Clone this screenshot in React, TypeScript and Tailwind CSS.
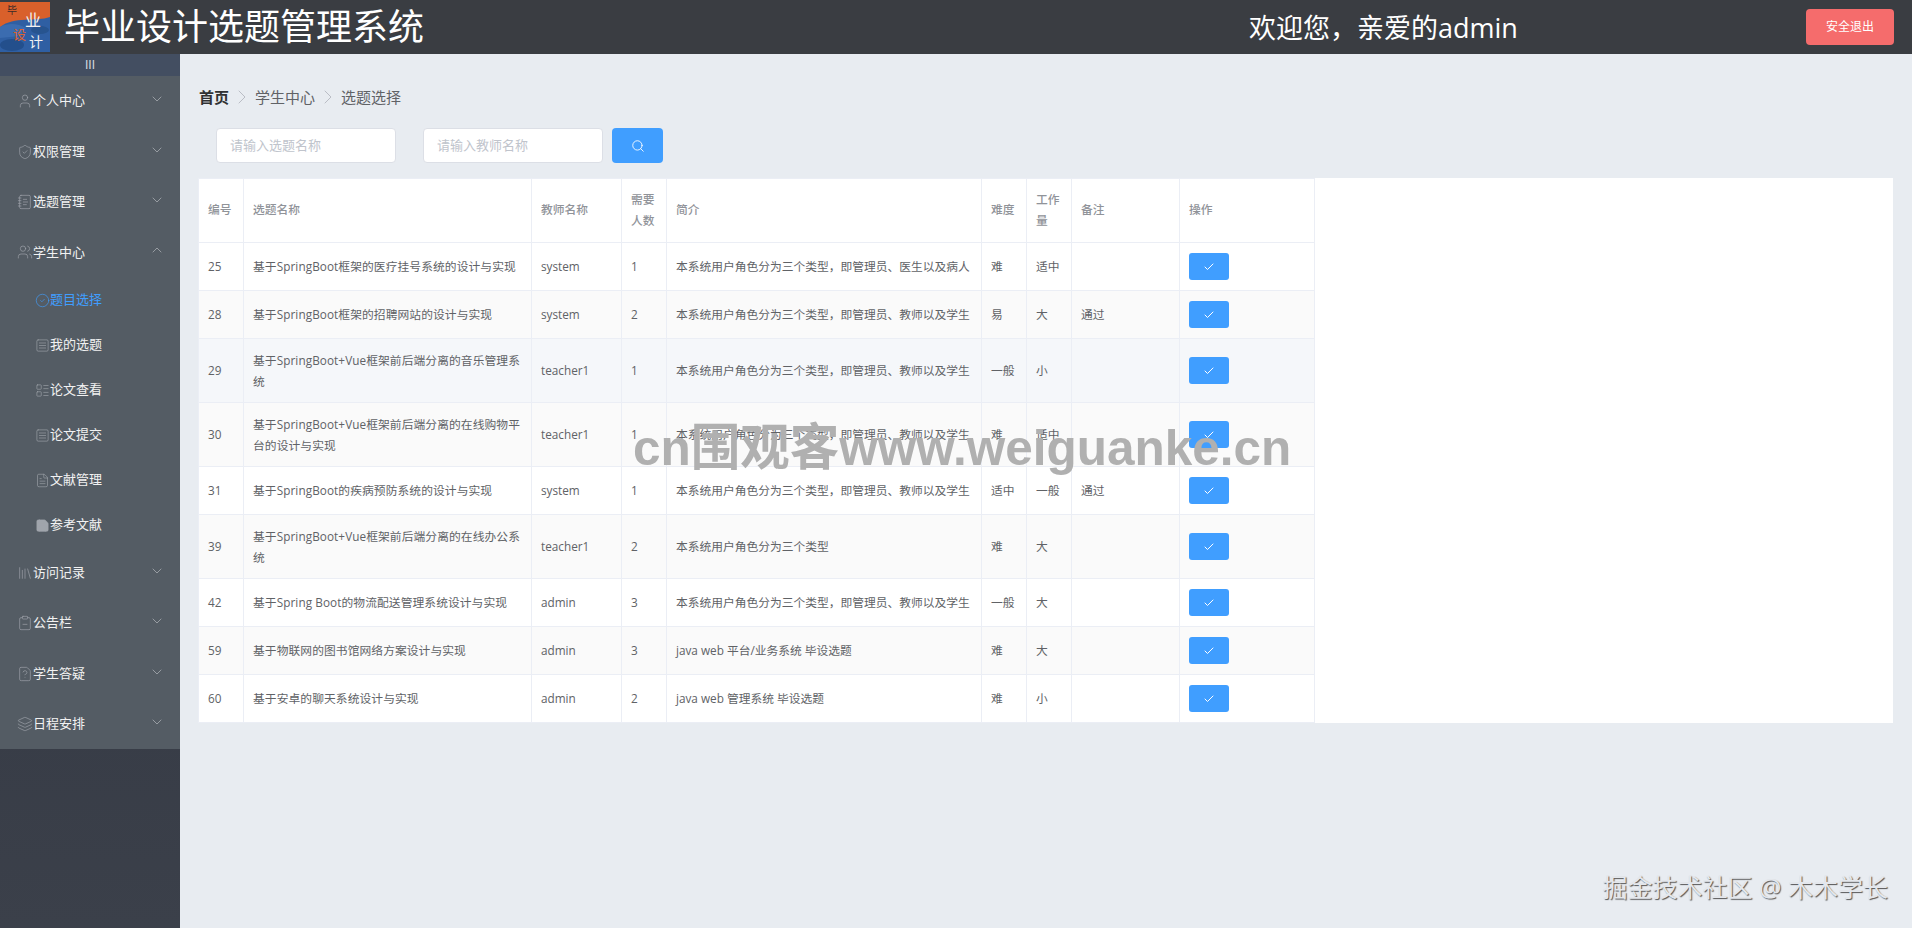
import {
  Check,
  ChevronDown,
  ChevronRight,
  ChevronUp,
  CircleCheck,
  ClipboardMinus,
  FileQuestion,
  FileText,
  LayoutList,
  Layers,
  Library,
  NotebookText,
  Save,
  Search,
  ShieldCheck,
  SquareMenu,
  User,
  Users,
} from "lucide-react";
import type { ComponentType } from "react";

type Icon = ComponentType<{ size?: number; className?: string; strokeWidth?: number; fill?: string }>;

interface Topic {
  id: number;
  title: string;
  teacher: string;
  count: number;
  intro: string;
  level: string;
  work: string;
  note: string;
  bg: string;
  height: string;
}

const topMenu: { label: string; icon: Icon }[] = [
  { label: "个人中心", icon: User },
  { label: "权限管理", icon: ShieldCheck },
  { label: "选题管理", icon: NotebookText },
];

const subMenu: { label: string; icon: Icon; active?: boolean; filled?: boolean }[] = [
  { label: "题目选择", icon: CircleCheck, active: true },
  { label: "我的选题", icon: SquareMenu },
  { label: "论文查看", icon: LayoutList },
  { label: "论文提交", icon: SquareMenu },
  { label: "文献管理", icon: FileText },
  { label: "参考文献", icon: Save, filled: true },
];

const bottomMenu: { label: string; icon: Icon }[] = [
  { label: "访问记录", icon: Library },
  { label: "公告栏", icon: ClipboardMinus },
  { label: "学生答疑", icon: FileQuestion },
  { label: "日程安排", icon: Layers },
];

const intro1 = "本系统用户角色分为三个类型，即管理员、教师以及学生";

const topics: Topic[] = [
  { id: 25, title: "基于SpringBoot框架的医疗挂号系统的设计与实现", teacher: "system", count: 1, intro: "本系统用户角色分为三个类型，即管理员、医生以及病人", level: "难", work: "适中", note: "", bg: "bg-white", height: "h-[48px]" },
  { id: 28, title: "基于SpringBoot框架的招聘网站的设计与实现", teacher: "system", count: 2, intro: intro1, level: "易", work: "大", note: "通过", bg: "bg-[#fafafa]", height: "h-[48px]" },
  { id: 29, title: "基于SpringBoot+Vue框架前后端分离的音乐管理系统", teacher: "teacher1", count: 1, intro: intro1, level: "一般", work: "小", note: "", bg: "bg-[#f5f7fa]", height: "h-[64px]" },
  { id: 30, title: "基于SpringBoot+Vue框架前后端分离的在线购物平台的设计与实现", teacher: "teacher1", count: 1, intro: intro1, level: "难", work: "适中", note: "", bg: "bg-[#fafafa]", height: "h-[64px]" },
  { id: 31, title: "基于SpringBoot的疾病预防系统的设计与实现", teacher: "system", count: 1, intro: intro1, level: "适中", work: "一般", note: "通过", bg: "bg-white", height: "h-[48px]" },
  { id: 39, title: "基于SpringBoot+Vue框架前后端分离的在线办公系统", teacher: "teacher1", count: 2, intro: "本系统用户角色分为三个类型", level: "难", work: "大", note: "", bg: "bg-[#fafafa]", height: "h-[64px]" },
  { id: 42, title: "基于Spring Boot的物流配送管理系统设计与实现", teacher: "admin", count: 3, intro: intro1, level: "一般", work: "大", note: "", bg: "bg-white", height: "h-[48px]" },
  { id: 59, title: "基于物联网的图书馆网络方案设计与实现", teacher: "admin", count: 3, intro: "java web 平台/业务系统 毕设选题", level: "难", work: "大", note: "", bg: "bg-[#fafafa]", height: "h-[48px]" },
  { id: 60, title: "基于安卓的聊天系统设计与实现", teacher: "admin", count: 2, intro: "java web 管理系统 毕设选题", level: "难", work: "小", note: "", bg: "bg-white", height: "h-[48px]" },
];

function Logo() {
  return (
    <svg width="50" height="50" viewBox="0 0 50 50" className="shrink-0">
      <rect width="50" height="50" fill="#2f5fa3" />
      <path d="M0 0H50V15C36 20 14 14 0 25Z" fill="#d9602b" />
      <path d="M0 25C10 20 18 22 26 26L20 34L0 36Z" fill="#3b6cb0" />
      <ellipse cx="12" cy="43" rx="12" ry="6" fill="#234f8c" />
      <ellipse cx="40" cy="28" rx="9" ry="4" fill="#27548f" />
      <text x="7" y="12" fontSize="10" fill="#3a2a28">毕</text>
      <text x="25" y="24" fontSize="16" fill="#f2f2f2">业</text>
      <text x="13" y="37" fontSize="13" fill="#e0622c">设</text>
      <text x="29" y="45" fontSize="14" fill="#f2f2f2">计</text>
    </svg>
  );
}

function MenuItem({ label, icon: Ico, open }: { label: string; icon: Icon; open?: boolean }) {
  return (
    <div className="flex h-[50.4px] items-center pl-[17px] pr-[15px] text-[13px] text-[#f2f2f2]">
      <Ico size={16} strokeWidth={1} className="shrink-0 text-[#a0a5ac]" />
      <span className="flex-1">{label}</span>
      {open ? (
        <ChevronUp size={16} strokeWidth={1.25} className="mb-[4px] text-[#a5a9ae]" />
      ) : (
        <ChevronDown size={16} strokeWidth={1.25} className="mb-[4px] text-[#a5a9ae]" />
      )}
    </div>
  );
}

function Sidebar() {
  return (
    <aside className="flex w-[180px] shrink-0 flex-col bg-gradient-to-b from-[#2e323d] to-[#3b404a]">
      <div className="flex h-[22px] items-center justify-center bg-[#434e61] font-['Liberation_Sans',sans-serif] text-[12px] text-[#d5d9df]">
        III
      </div>
      <nav className="bg-[#545c64]">
        {topMenu.map((m) => (
          <MenuItem key={m.label} label={m.label} icon={m.icon} />
        ))}
        <MenuItem label="学生中心" icon={Users} open />
        {subMenu.map((m) => (
          <div
            key={m.label}
            className={`flex h-[45px] items-center pl-[35px] text-[13px] ${m.active ? "text-[#409eff]" : "text-[#f2f2f2]"}`}
          >
            <m.icon
              size={15}
              strokeWidth={1}
              fill={m.filled ? "currentColor" : "none"}
              className={`shrink-0 ${m.active ? "text-[#409eff]" : "text-[#a0a5ac]"}`}
            />
            <span>{m.label}</span>
          </div>
        ))}
        {bottomMenu.map((m) => (
          <MenuItem key={m.label} label={m.label} icon={m.icon} />
        ))}
      </nav>
    </aside>
  );
}

function TopicTable() {
  return (
    <div className="mt-[15px] bg-white">
      <table className="-ml-[1px] w-[1116px] table-fixed border-collapse text-[11.75px] leading-[21px] text-[#606266]">
        <colgroup>
          <col className="w-[45px]" />
          <col className="w-[288px]" />
          <col className="w-[90px]" />
          <col className="w-[45px]" />
          <col className="w-[315px]" />
          <col className="w-[45px]" />
          <col className="w-[45px]" />
          <col className="w-[108px]" />
          <col className="w-[135px]" />
        </colgroup>
        <thead>
          <tr className="h-[64px] text-left text-[#909399]">
            {["编号", "选题名称", "教师名称", "需要人数", "简介", "难度", "工作量", "备注", "操作"].map((h) => (
              <th key={h} className="border border-[#ebeef5] px-[9px] pb-[2px] font-medium">
                {h}
              </th>
            ))}
          </tr>
        </thead>
        <tbody>
          {topics.map((t) => (
            <tr key={t.id} className={`${t.bg} ${t.height}`}>
              <td className="border border-[#ebeef5] px-[9px]">{t.id}</td>
              <td className="border border-[#ebeef5] px-[9px] tracking-[0.08px]">{t.title}</td>
              <td className="border border-[#ebeef5] px-[9px]">{t.teacher}</td>
              <td className="border border-[#ebeef5] px-[9px]">{t.count}</td>
              <td className="border border-[#ebeef5] px-[9px]">{t.intro}</td>
              <td className="border border-[#ebeef5] px-[9px]">{t.level}</td>
              <td className="border border-[#ebeef5] px-[9px]">{t.work}</td>
              <td className="border border-[#ebeef5] px-[9px]">{t.note}</td>
              <td className="border border-[#ebeef5] px-[9px]">
                <button className="flex h-[27px] w-[40px] items-center justify-center rounded-[3px] bg-[#409eff] text-white">
                  <Check size={12} strokeWidth={2} />
                </button>
              </td>
            </tr>
          ))}
        </tbody>
      </table>
    </div>
  );
}

export default function App() {
  return (
    <div className="relative flex h-screen w-full flex-col overflow-hidden bg-[#e8ecf1] font-['Open_Sans','Noto_Sans_CJK_SC',sans-serif]">
      <header className="flex h-[54px] shrink-0 items-center bg-[#3a3d42] text-white">
        <Logo />
        <h1 className="ml-[14px] text-[36px] font-normal leading-none">毕业设计选题管理系统</h1>
        <div className="ml-[825px] text-[27px] leading-none">欢迎您，亲爱的admin</div>
        <button className="ml-auto mr-[18px] h-[36px] w-[88px] rounded-[4px] bg-[#f56c6c] text-[12px] text-white">
          安全退出
        </button>
      </header>
      <div className="flex min-h-0 flex-1">
        <Sidebar />
        <main className="flex-1 px-[19px] pt-[33px]">
          <div className="flex h-[20px] items-center text-[15px] text-[#606266]">
            <span className="font-bold text-[#303133]">首页</span>
            <ChevronRight size={24} strokeWidth={0.9} className="mx-[1px] text-[#b4b8c0]" />
            <span>学生中心</span>
            <ChevronRight size={24} strokeWidth={0.9} className="mx-[1px] text-[#b4b8c0]" />
            <span>选题选择</span>
          </div>
          <div className="mt-[21px] flex h-[35px] pl-[17px]">
            <input
              placeholder="请输入选题名称"
              className="h-full w-[180px] rounded-[4px] border border-[#dcdfe6] bg-white px-[13px] pb-[2px] text-[13px] placeholder:text-[#c0c4cc]"
            />
            <input
              placeholder="请输入教师名称"
              className="ml-[27px] h-full w-[180px] rounded-[4px] border border-[#dcdfe6] bg-white px-[13px] pb-[2px] text-[13px] placeholder:text-[#c0c4cc]"
            />
            <button className="ml-[9px] flex h-full w-[51px] items-center justify-center rounded-[4px] bg-[#409eff] text-white">
              <Search size={14} strokeWidth={1.5} />
            </button>
          </div>
          <TopicTable />
        </main>
      </div>
      <div className="pointer-events-none absolute left-[633px] top-[418px] whitespace-nowrap font-['Liberation_Sans','Noto_Sans_CJK_SC',sans-serif] text-[49.5px] font-bold leading-[60px] text-[#b0b0b0]">
        cn围观客www.weiguanke.cn
      </div>
      <div className="pointer-events-none absolute right-[24px] top-[870px] whitespace-nowrap text-[25px] leading-[34px] text-[#e4e7ec] [text-shadow:1px_1px_1px_#555]">
        掘金技术社区 @ 木木学长
      </div>
    </div>
  );
}
